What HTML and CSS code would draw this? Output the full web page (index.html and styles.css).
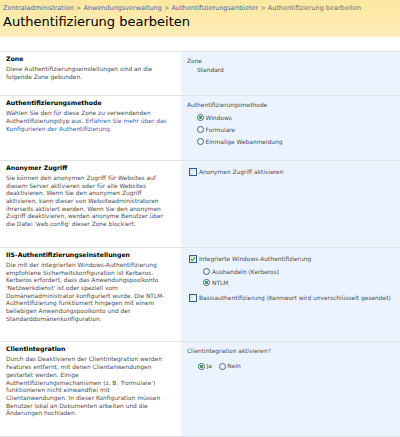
FILE: index.html
```html
<!DOCTYPE html>
<html lang="de">
<head>
<meta charset="utf-8">
<title>Authentifizierung bearbeiten</title>
<link rel="stylesheet" href="styles.css">
</head>
<body>
<header class="titlearea">
  <nav class="crumbs"><a href="#">Zentraladministration</a><span class="sep"> &gt; </span><a href="#">Anwendungsverwaltung</a><span class="sep"> &gt; </span><a href="#">Authentifizierungsanbieter</a><span class="sep"> &gt; </span><span class="current">Authentifizierung bearbeiten</span></nav>
  <h1 class="title">Authentifizierung bearbeiten</h1>
</header>
<main class="form">
  <section class="row row-zone">
    <div class="desc">
      <h2>Zone</h2>
      <p>Diese Authentifizierungseinstellungen sind an die folgende Zone gebunden.</p>
    </div>
    <div class="ctrl">
      <div class="label">Zone</div>
      <div class="value">Standard</div>
    </div>
  </section>
  <section class="row">
    <div class="desc">
      <h2>Authentifizierungsmethode</h2>
      <p>Wählen Sie den für diese Zone zu verwendenden Authentifizierungstyp aus. <a href="#">Erfahren Sie mehr über das Konfigurieren der Authentifizierung.</a></p>
    </div>
    <div class="ctrl">
      <div class="label">Authentifizierungsmethode</div>
      <div class="options">
        <div class="opt"><span class="radio checked"></span>Windows</div>
        <div class="opt"><span class="radio"></span>Formulare</div>
        <div class="opt"><span class="radio"></span>Einmalige Webanmeldung</div>
      </div>
    </div>
  </section>
  <section class="row">
    <div class="desc">
      <h2>Anonymer Zugriff</h2>
      <p>Sie können den anonymen Zugriff für Websites auf diesem Server aktivieren oder für alle Websites deaktivieren. Wenn Sie den anonymen Zugriff aktivieren, kann dieser von Websiteadministratoren ihrerseits aktiviert werden. Wenn Sie den anonymen Zugriff deaktivieren, werden anonyme Benutzer über die Datei 'web.config' dieser Zone blockiert.</p>
    </div>
    <div class="ctrl">
      <div class="checks">
        <div class="copt"><span class="box"></span>Anonymen Zugriff aktivieren</div>
      </div>
    </div>
  </section>
  <section class="row">
    <div class="desc">
      <h2>IIS-Authentifizierungseinstellungen</h2>
      <p>Die mit der integrierten Windows-Authentifizierung empfohlene Sicherheitskonfiguration ist Kerberos. Kerberos erfordert, dass das Anwendungspoolkonto 'Netzwerkdienst' ist oder speziell vom Domänenadministrator konfiguriert wurde. Die NTLM-Authentifizierung funktioniert hingegen mit einem beliebigen Anwendungspoolkonto und der Standarddomänenkonfiguration.</p>
    </div>
    <div class="ctrl">
      <div class="checks">
        <div class="copt"><span class="box"><svg viewBox="0 0 8 8" width="6" height="6"><path d="M1.2 4.2 L3.1 6 L6.8 1.8" fill="none" stroke="#21a121" stroke-width="1.4"/></svg></span>Integrierte Windows-Authentifizierung</div>
        <div class="sub">
          <div class="opt opt-small"><span class="radio"></span>Aushandeln (Kerberos)</div>
          <div class="opt opt-small"><span class="radio checked"></span>NTLM</div>
        </div>
        <div class="copt"><span class="box"></span>Basisauthentifizierung (Kennwort wird unverschlüsselt gesendet)</div>
      </div>
    </div>
  </section>
  <section class="row">
    <div class="desc">
      <h2>Clientintegration</h2>
      <p>Durch das Deaktivieren der Clientintegration werden Features entfernt, mit denen Clientanwendungen gestartet werden. Einige Authentifizierungsmechanismen (z. B. 'Formulare') funktionieren nicht einwandfrei mit Clientanwendungen. In dieser Konfiguration müssen Benutzer lokal an Dokumenten arbeiten und die Änderungen hochladen.</p>
    </div>
    <div class="ctrl">
      <div class="label">Clientintegration aktivieren?</div>
      <div class="inline-options">
        <div class="opt"><span class="radio checked"></span>Ja</div>
        <div class="opt"><span class="radio"></span>Nein</div>
      </div>
    </div>
  </section>
</main>
</body>
</html>
```
FILE: styles.css
```css
body {
  margin: 0;
  font-family: "DejaVu Sans", Verdana, sans-serif;
  background: #fff;
}

.titlearea {
  background: linear-gradient(#fde8a2, #feedb7);
  padding: 4px 3px 7px;
}

.crumbs {
  font-size: 6.5px;
  line-height: 9px;
  color: #6b6b6b;
  white-space: nowrap;
}

.crumbs a {
  color: #3f66b5;
  text-decoration: none;
}

.title {
  margin: 1px 0 0;
  font-size: 13px;
  line-height: 16px;
  font-weight: normal;
  color: #000;
}

.form {
  margin-top: 14px;
  border-bottom: 1px solid #dfe2e6;
}

.row {
  display: grid;
  grid-template-columns: 181px 1fr;
  border-top: 1px solid #dfe2e6;
}

.desc {
  padding: 2px 11px 18px 6px;
}

.row-zone .desc {
  padding-bottom: 14px;
}

.desc h2 {
  margin: 0;
  font-size: 6.2px;
  line-height: 9px;
  font-weight: bold;
  color: #000;
}

.desc p {
  margin: 3px 0 0;
  font-size: 5.9px;
  line-height: 7.7px;
  color: #4d4d4d;
}

.desc a {
  color: #3463b5;
  text-decoration: none;
}

.ctrl {
  background: #ebf3ff;
  padding: 4.5px 6px 12px;
  font-size: 5.9px;
  color: #4d4d4d;
}

.label {
  line-height: 8px;
}

.value {
  line-height: 8px;
  margin-top: 1.5px;
  padding-left: 10px;
}

.options {
  margin-top: 3px;
  padding-left: 10px;
}

.inline-options {
  display: flex;
  gap: 7px;
  margin-top: 5.5px;
  padding-left: 11px;
}

.opt {
  display: flex;
  align-items: center;
  gap: 1.5px;
  height: 12px;
  white-space: nowrap;
}

.opt-small {
  height: 11px;
  gap: 2.5px;
}

.radio {
  flex: none;
  width: 7px;
  height: 7px;
  box-sizing: border-box;
  border: 1px solid #3a63a9;
  border-radius: 50%;
  background: radial-gradient(circle, #fff 0, #eef0ea 100%);
}

.radio.checked {
  background: radial-gradient(circle, #22a322 0 1.3px, #fff 1.7px);
}

.checks {
  margin-left: 2px;
}

.copt {
  display: flex;
  align-items: center;
  gap: 2px;
  height: 13px;
  white-space: nowrap;
}

.box {
  flex: none;
  display: flex;
  align-items: center;
  justify-content: center;
  width: 8px;
  height: 8px;
  box-sizing: border-box;
  border: 1px solid #2f5b98;
  background: linear-gradient(135deg, #dcdcd6, #fbfbf9);
}

.sub {
  padding: 1px 0 3.5px 13.5px;
}
```
